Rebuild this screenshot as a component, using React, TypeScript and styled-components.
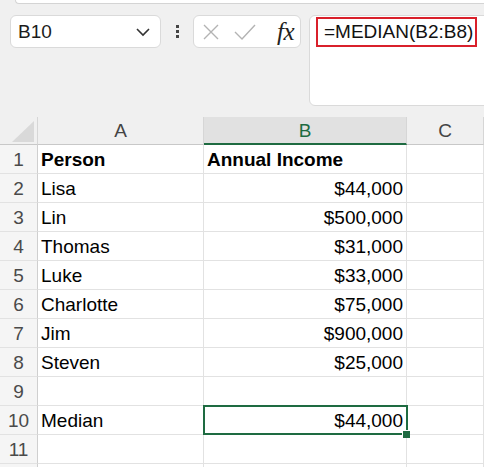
import React from 'react';
import styled, { createGlobalStyle } from 'styled-components';

const GlobalStyle = createGlobalStyle`
  html, body {
    margin: 0;
    padding: 0;
    background: #f0f0f0;
    font-family: "Liberation Sans", Arial, sans-serif;
    overflow: hidden;
  }
  * { box-sizing: border-box; }
`;

const Page = styled.div`
  width: 484px;
  height: 467px;
  overflow: hidden;
  background: #f0f0f0;
`;

// bord de la barre du dessus, coupé par le haut de l'image
const TopStrip = styled.div`
  height: 4px;
  margin-left: 15px;
  background: #fff;
  border-bottom: 1px solid #d4d4d4;
  border-left: 1px solid #d4d4d4;
  border-bottom-left-radius: 6px;
`;

const Toolbar = styled.div`
  display: flex;
  align-items: flex-start;
  padding: 11px 0 0 10px;
  height: 102px;
`;

const Box = styled.div<{ $width: number }>`
  width: ${(p) => p.$width}px;
  height: 33px;
  background: #fff;
  border: 1px solid #dadada;
  border-radius: 6px;
  display: flex;
  align-items: center;
`;

const NameText = styled.span`
  flex: 1;
  padding-left: 7px;
  font-size: 19px;
  color: #1b1b1b;
`;

const Chevron = styled.svg`
  width: 16px;
  height: 10px;
  margin-right: 9px;
`;

const Dots = styled.div`
  width: 32px;
  height: 33px;
  display: flex;
  flex-direction: column;
  align-items: center;
  justify-content: center;
  gap: 2px;

  span {
    width: 3px;
    height: 3px;
    background: #444;
  }
`;

const IconBtn = styled.svg<{ $w: number; $gap: number }>`
  width: ${(p) => p.$w}px;
  height: 18px;
  margin-left: ${(p) => p.$gap}px;
`;

const Fx = styled.span`
  margin-left: auto;
  margin-right: 6px;
  font-family: "Liberation Serif", "Times New Roman", serif;
  font-style: italic;
  font-size: 25px;
  line-height: 25px;
  color: #222;
  letter-spacing: -0.5px;
`;

const FormulaBar = styled.div`
  flex: 1;
  margin-left: 8px;
  margin-right: -10px;
  height: 91px;
  background: #fff;
  border: 1px solid #dadada;
  border-radius: 6px;
  padding: 1px 0 0 6px;
`;

const Formula = styled.div`
  display: inline-block;
  border: 2px solid #d9202b;
  height: 30px;
  width: 161px;
  padding: 0 0 0 6px;
  font-size: 19px;
  line-height: 26px;
  color: #111;
`;

const Grid = styled.div`
  margin-top: 11px;
  display: grid;
  grid-template-columns: 38px 166px 203px 1fr;
  grid-auto-rows: 29px;
  grid-template-rows: 28px;
`;

const Corner = styled.div`
  position: relative;
  border-right: 1px solid #d6d6d6;
  border-bottom: 1px solid #c8c8c8;

  &::after {
    content: '';
    position: absolute;
    right: 3px;
    bottom: 2px;
    width: 22px;
    height: 21px;
    background: #d9d9d9;
    clip-path: polygon(100% 0, 100% 100%, 0 100%);
  }
`;

const ColHead = styled.div<{ $active?: boolean }>`
  background: ${(p) => (p.$active ? '#e1e1e1' : '#f0f0f0')};
  color: ${(p) => (p.$active ? '#1e6b41' : '#444')};
  border-right: 1px solid #d6d6d6;
  border-bottom: ${(p) => (p.$active ? '2px solid #1e6b41' : '1px solid #c8c8c8')};
  font-size: 19px;
  text-align: center;
  line-height: 27px;
`;

const RowHead = styled.div`
  border-right: 1px solid #cfcfcf;
  border-bottom: 1px solid #e2e2e2;
  background: #f5f5f5;
  color: #4a4a4a;
  font-size: 19px;
  text-align: center;
  line-height: 24px;
  padding-top: 3px;
`;

const Cell = styled.div<{ $bold?: boolean; $right?: boolean; $selected?: boolean }>`
  position: relative;
  z-index: ${(p) => (p.$selected ? 2 : 0)};
  background: #fff;
  border-right: 1px solid #e2e2e2;
  border-bottom: 1px solid #e2e2e2;
  font-size: 19px;
  font-weight: ${(p) => (p.$bold ? 700 : 400)};
  text-align: ${(p) => (p.$right ? 'right' : 'left')};
  color: #000;
  line-height: 24px;
  padding: 3px 3px 0 3px;
  white-space: nowrap;

  ${(p) =>
    p.$selected &&
    `
    &::before {
      content: '';
      position: absolute;
      left: -1px;
      top: -1px;
      right: -2px;
      bottom: -1px;
      border: 2px solid #1e6b41;
    }
    &::after {
      content: '';
      position: absolute;
      right: -4px;
      bottom: -4px;
      width: 7px;
      height: 7px;
      background: #1e6b41;
      border-left: 1px solid #fff;
      border-top: 1px solid #fff;
    }
  `}
`;

type Row = { n: string; a: string; b: string; bold?: boolean; selected?: boolean };

const rows: Row[] = [
  { n: '1', a: 'Person', b: 'Annual Income', bold: true },
  { n: '2', a: 'Lisa', b: '$44,000' },
  { n: '3', a: 'Lin', b: '$500,000' },
  { n: '4', a: 'Thomas', b: '$31,000' },
  { n: '5', a: 'Luke', b: '$33,000' },
  { n: '6', a: 'Charlotte', b: '$75,000' },
  { n: '7', a: 'Jim', b: '$900,000' },
  { n: '8', a: 'Steven', b: '$25,000' },
  { n: '9', a: '', b: '' },
  { n: '10', a: 'Median', b: '$44,000', selected: true },
  { n: '11', a: '', b: '' },
  { n: '', a: '', b: '' },
];

const App: React.FC = () => {
  return (
    <Page>
      <GlobalStyle />
      <TopStrip />
      <Toolbar>
        <Box $width={151}>
          <NameText>B10</NameText>
          <Chevron viewBox="0 0 16 10">
            <path d="M2 2 L8 8 L14 2" fill="none" stroke="#333" strokeWidth="1.6" />
          </Chevron>
        </Box>
        <Dots>
          <span />
          <span />
          <span />
        </Dots>
        <Box $width={108}>
          <IconBtn $w={18} $gap={8} viewBox="0 0 18 18">
            <path d="M2 2 L16 16 M16 2 L2 16" stroke="#b3b3b3" strokeWidth="1.4" fill="none" />
          </IconBtn>
          <IconBtn $w={22} $gap={14} viewBox="0 0 22 18">
            <path d="M1 9 L8 16 L21 2" stroke="#b3b3b3" strokeWidth="1.4" fill="none" />
          </IconBtn>
          <Fx>fx</Fx>
        </Box>
        <FormulaBar>
          <Formula>=MEDIAN(B2:B8)</Formula>
        </FormulaBar>
      </Toolbar>
      <Grid>
        <Corner />
        <ColHead>A</ColHead>
        <ColHead $active>B</ColHead>
        <ColHead>C</ColHead>
        {rows.map((r, i) => (
          <React.Fragment key={i}>
            <RowHead>{r.n}</RowHead>
            <Cell $bold={r.bold}>{r.a}</Cell>
            <Cell $bold={r.bold} $right={!r.bold} $selected={r.selected}>
              {r.b}
            </Cell>
            <Cell />
          </React.Fragment>
        ))}
      </Grid>
    </Page>
  );
};

export default App;
